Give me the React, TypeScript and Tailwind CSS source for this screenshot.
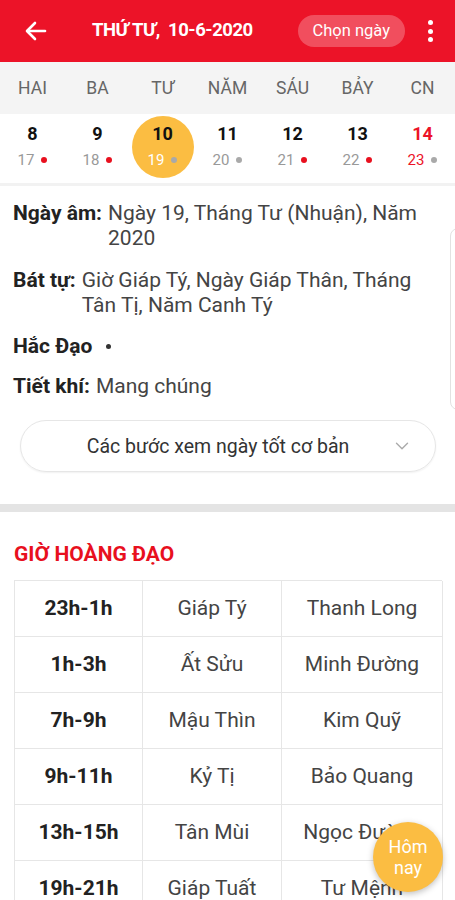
import { ChevronDown } from 'lucide-react';

const weekdays = ['HAI', 'BA', 'TƯ', 'NĂM', 'SÁU', 'BẢY', 'CN'];

const days = [
  { d: 8, lunar: 17, good: true },
  { d: 9, lunar: 18, good: true },
  { d: 10, lunar: 19, good: false, selected: true },
  { d: 11, lunar: 20, good: false },
  { d: 12, lunar: 21, good: true },
  { d: 13, lunar: 22, good: true },
  { d: 14, lunar: 23, good: false, sunday: true },
];

const hours = [
  ['23h-1h', 'Giáp Tý', 'Thanh Long'],
  ['1h-3h', 'Ất Sửu', 'Minh Đường'],
  ['7h-9h', 'Mậu Thìn', 'Kim Quỹ'],
  ['9h-11h', 'Kỷ Tị', 'Bảo Quang'],
  ['13h-15h', 'Tân Mùi', 'Ngọc Đường'],
  ['19h-21h', 'Giáp Tuất', 'Tư Mệnh'],
];

export default function App() {
  return (
    <div className="relative w-[455px] h-[900px] overflow-hidden bg-white font-['Roboto',sans-serif]">
      {/* header */}
      <div className="h-[62px] bg-[#ec1328] flex items-center text-white">
        <div className="w-[72px] pl-[25px]">
          <svg width="22" height="20" viewBox="0 0 22 20" fill="none" stroke="white" strokeWidth="2.6" strokeLinecap="round" strokeLinejoin="round">
            <path d="M20 10H3" />
            <path d="M10 2L2 10l8 8" />
          </svg>
        </div>
        <div className="ml-[20px] text-[18.5px] font-bold tracking-tight whitespace-pre">THỨ TƯ,  10-6-2020</div>
        <div className="ml-auto h-[32px] px-[15px] rounded-full bg-white/25 flex items-center text-[16.5px]">Chọn ngày</div>
        <div className="w-[50px] flex flex-col items-center gap-[3.5px]">
          <span className="w-[5px] h-[5px] rounded-full bg-white" />
          <span className="w-[5px] h-[5px] rounded-full bg-white" />
          <span className="w-[5px] h-[5px] rounded-full bg-white" />
        </div>
      </div>

      {/* weekdays */}
      <div className="h-[52px] bg-[#f4f4f4] grid grid-cols-7 items-center text-[17.5px] text-[#666]">
        {weekdays.map((w) => (
          <div key={w} className="text-center">{w}</div>
        ))}
      </div>

      {/* dates */}
      <div className="h-[72px] grid grid-cols-7 border-b-[3px] border-[#f2f2f2]">
        {days.map((day) => (
          <div key={day.d} className="relative flex flex-col items-center">
            {day.selected && (
              <div className="absolute left-1/2 top-[2px] -translate-x-1/2 w-[62px] h-[62px] rounded-full bg-[#fbbd42]" />
            )}
            <div className={`relative mt-[8px] text-[18px] font-bold leading-[24px] ${day.sunday ? 'text-[#ec1328]' : 'text-[#111]'}`}>
              {day.d}
            </div>
            <div className="relative mt-[4px] flex items-center gap-[7px] text-[15px] leading-[20px]">
              <span className={day.selected ? 'text-white' : day.sunday ? 'text-[#ec1328]' : 'text-[#999]'}>{day.lunar}</span>
              <span className={`w-[6px] h-[6px] rounded-full ${day.good ? 'bg-[#e8101e]' : 'bg-[#a9a9a9]'}`} />
            </div>
          </div>
        ))}
      </div>

      {/* info */}
      <div className="pl-[13px] pr-[20px] pt-[15px] text-[21px] leading-[25px] text-[#444]">
        <div className="flex">
          <span className="font-bold text-[#222] whitespace-nowrap mr-[6px]">Ngày âm:</span>
          <span>Ngày 19, Tháng Tư (Nhuận), Năm 2020</span>
        </div>
        <div className="flex mt-[17px]">
          <span className="font-bold text-[#222] whitespace-nowrap mr-[6px]">Bát tự:</span>
          <span>Giờ Giáp Tý, Ngày Giáp Thân, Tháng Tân Tị, Năm Canh Tý</span>
        </div>
        <div className="flex items-center mt-[16px]">
          <span className="font-bold text-[#222]">Hắc Đạo</span>
          <span className="ml-[14px] w-[5px] h-[5px] rounded-full bg-[#333]" />
        </div>
        <div className="flex mt-[15px]">
          <span className="font-bold text-[#222] mr-[6px]">Tiết khí:</span>
          <span>Mang chúng</span>
        </div>
        <div className="mt-[21px] ml-[7px] mr-[-1px] h-[52px] rounded-full border border-[#e6e6e6] shadow-[0_1px_2px_rgba(0,0,0,0.06)] flex items-center justify-center relative">
          <span className="text-[19.5px] text-[#333] ml-[-20px]">Các bước xem ngày tốt cơ bản</span>
          <ChevronDown className="absolute right-[22px]" size={22} strokeWidth={1.5} color="#aaa" />
        </div>
      </div>

      {/* separator */}
      <div className="mt-[32px] h-[8px] bg-[#e4e4e4]" />

      {/* giờ hoàng đạo */}
      <div className="px-[14px] pt-[30px]">
        <div className="text-[21px] leading-[24px] font-bold text-[#e8101e]">GIỜ HOÀNG ĐẠO</div>
        <div className="mt-[14px] w-[428px] border-t border-l border-[#e6e6e6] grid grid-cols-[128px_139px_161px]">
          {hours.map((row) =>
            row.map((cell, i) => (
              <div
                key={row[0] + i}
                className={`h-[56px] border-r border-b border-[#e6e6e6] flex items-center justify-center text-[21px] whitespace-nowrap ${
                  i === 0 ? 'font-bold text-[#222]' : 'text-[#444]'
                }`}
              >
                {cell}
              </div>
            ))
          )}
        </div>
      </div>

      {/* card edge peeking on the right */}
      <div className="absolute left-[450px] top-[228px] w-[30px] h-[182px] rounded-[8px] border border-[#e2e2e2]" />

      {/* hôm nay button */}
      <div className="absolute left-[373px] top-[822px] w-[70px] h-[70px] rounded-full bg-[#fbbd42] shadow-[0_2px_6px_rgba(0,0,0,0.25)] flex flex-col items-center justify-center text-white text-[18px] leading-[21px]">
        <span>Hôm</span>
        <span>nay</span>
      </div>
    </div>
  );
}
